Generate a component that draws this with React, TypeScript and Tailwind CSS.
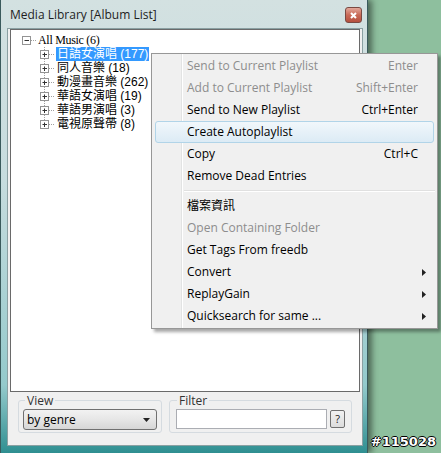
import React from "react";

const ui = { fontFamily: "'Open Sans','Noto Sans CJK TC',sans-serif" };
const treeFont = { fontFamily: "'Liberation Serif','Noto Sans CJK TC',serif" };
const cjkFont = { fontFamily: "'Liberation Sans','Noto Sans CJK TC',sans-serif" };

type Item =
  | { sep: true }
  | { label: string; key?: string; disabled?: boolean; hot?: boolean; sub?: boolean };

const menu: Item[] = [
  { label: "Send to Current Playlist", key: "Enter", disabled: true },
  { label: "Add to Current Playlist", key: "Shift+Enter", disabled: true },
  { label: "Send to New Playlist", key: "Ctrl+Enter" },
  { label: "Create Autoplaylist", hot: true },
  { label: "Copy", key: "Ctrl+C" },
  { label: "Remove Dead Entries" },
  { sep: true },
  { label: "檔案資訊" },
  { label: "Open Containing Folder", disabled: true },
  { label: "Get Tags From freedb" },
  { label: "Convert", sub: true },
  { label: "ReplayGain", sub: true },
  { label: "Quicksearch for same ...", sub: true },
];

const genres = [
  "日語女演唱 (177)",
  "同人音樂 (18)",
  "動漫畫音樂 (262)",
  "華語女演唱 (19)",
  "華語男演唱 (3)",
  "電視原聲帶 (8)",
];

function Expander({ open, last, child }: { open?: boolean; last?: boolean; child?: boolean }) {
  return (
    <svg width="18" height="14" className="shrink-0">
      {child && (
        <line x1="6.5" y1="0" x2="6.5" y2={last ? 7 : 14} stroke="#a0a0a0" strokeDasharray="1 1" />
      )}
      <line x1="11" y1="7.5" x2="16" y2="7.5" stroke="#a0a0a0" strokeDasharray="1 1" />
      <rect x="2.5" y="3.5" width="8" height="8" fill="#fff" stroke="#949494" />
      <line x1="4.5" y1="7.5" x2="9" y2="7.5" stroke="#333" />
      {!open && <line x1="6.5" y1="5.5" x2="6.5" y2="10" stroke="#333" />}
    </svg>
  );
}

function ContextMenu() {
  return (
    <div
      className="absolute left-[151px] top-[53px] w-[287px] border border-[#979797] py-[1px] shadow-[3px_3px_3px_rgba(0,0,0,0.35)] bg-[linear-gradient(to_right,#f0f0f0_29px,#e2e3e3_29px,#e2e3e3_30px,#ffffff_30px,#ffffff_31px,#f0f0f0_31px)] text-[12px]"
      style={ui}
    >
      {menu.map((m, i) =>
        "sep" in m ? (
          <div key={i} className="h-[8px] flex flex-col justify-center ml-[32px] mr-[2px]">
            <div className="h-px bg-[#e0e0e0]" />
            <div className="h-px bg-white" />
          </div>
        ) : (
          <div
            key={i}
            className={
              "mx-[3px] h-[22px] flex items-center pl-[31px] rounded-[3px] border " +
              (m.hot
                ? "border-[#b1d4e8] bg-[linear-gradient(to_bottom,#f1f7fb,#dcebf5)]"
                : "border-transparent") +
              (m.disabled ? " text-[#8d8d8d]" : " text-black")
            }
          >
            <span className="flex-1 whitespace-nowrap">{m.label}</span>
            {m.key && <span className="whitespace-nowrap">{m.key}</span>}
            <span className="w-[15px] pl-[4px] flex items-center">
              {m.sub && (
                <svg width="4" height="7">
                  <path d="M0 0 L4 3.5 L0 7 Z" fill="#222" />
                </svg>
              )}
            </span>
          </div>
        )
      )}
    </div>
  );
}

export default function App() {
  return (
    <div className="relative w-[441px] h-[453px] overflow-hidden bg-[#8ebf9e] flex">
      <div className="w-[368px] h-[453px] flex flex-col shrink-0 border-l border-r border-[#3a5a5c] bg-[linear-gradient(to_bottom,#d3e1e1_0%,#c6dcde_40%,#94cacc_85%,#2f8f91_100%)] shadow-[4px_0_6px_rgba(0,0,0,0.45)]">
        <div className="h-[28px] flex items-start">
          <div className="flex-1 pl-[9px] pt-[6px] text-[12px] text-[#1e1e1e]" style={ui}>
            Media Library [Album List]
          </div>
          <div className="mt-[7px] mr-[5px] w-[17px] h-[16px] rounded-[3px] border border-[#7a4a42] bg-[linear-gradient(to_bottom,#e2a89b,#c96a57_50%,#b5503e)] flex items-center justify-center">
            <svg width="7" height="7">
              <path d="M1 1 L6 6 M6 1 L1 6" stroke="#fff" strokeWidth="2" />
            </svg>
          </div>
        </div>

        <div className="ml-[6px] w-[356px] h-[418px] bg-[#f0f0f0] border border-[#8aa0a2] flex flex-col">
          <div className="mx-[2px] h-[363px] bg-white border border-[#6a6a6a] pt-[3px]">
            <div className="h-[14px] flex items-center pl-[9px] text-[12px] text-black" style={treeFont}>
              <Expander open />
              <span className="block h-[14px] leading-[14px] tracking-[-0.3px]">All Music (6)</span>
            </div>
            {genres.map((g, i) => (
              <div key={g} className="h-[14px] flex items-center pl-[27px] text-[12px] text-black" style={cjkFont}>
                <Expander child last={i === genres.length - 1} />
                <span
                  className={
                    "block h-[14px] leading-[14px] px-[1px] " +
                    (i === 0 ? "bg-[#3399ff] text-white" : "")
                  }
                >
                  {g}
                </span>
              </div>
            ))}
          </div>

          <div className="flex px-[10px] gap-[7px] pt-[1px] text-[12px]" style={ui}>
            <fieldset className="w-[145px] h-[40px] border border-[#d5dbe0] rounded-[3px] px-[4px]">
              <legend className="px-[2px] ml-[2px] text-[#333] leading-[15px]">View</legend>
              <div className="mt-[1px] h-[21px] rounded-[3px] border border-[#707070] bg-[linear-gradient(to_bottom,#f2f2f2,#e6e6e6_50%,#d6d6d6)] flex items-center pl-[3px] pr-[6px]">
                <span className="flex-1 text-black">by genre</span>
                <svg width="7" height="4">
                  <path d="M0 0 L7 0 L3.5 4 Z" fill="#222" />
                </svg>
              </div>
            </fieldset>
            <fieldset className="w-[182px] h-[40px] border border-[#d5dbe0] rounded-[3px] px-[6px]">
              <legend className="px-[2px] ml-[1px] text-[#333] leading-[15px]">Filter</legend>
              <div className="mt-[1px] flex items-center gap-[3px]">
                <div className="w-[151px] h-[20px] bg-white border border-[#abadb3]" />
                <div className="w-[15px] h-[18px] rounded-[2px] border border-[#707070] bg-[linear-gradient(to_bottom,#f2f2f2,#dcdcdc)] flex items-center justify-center text-[11px] text-[#222]">
                  ?
                </div>
              </div>
            </fieldset>
          </div>
        </div>
      </div>

      <ContextMenu />

      <div
        className="absolute right-[5px] bottom-[2px] text-[13px] font-bold text-white [text-shadow:1px_0_0_#000,-1px_0_0_#000,0_1px_0_#000,0_-1px_0_#000]"
        style={{ fontFamily: "'DejaVu Sans',sans-serif" }}
      >
        #115028
      </div>
    </div>
  );
}
